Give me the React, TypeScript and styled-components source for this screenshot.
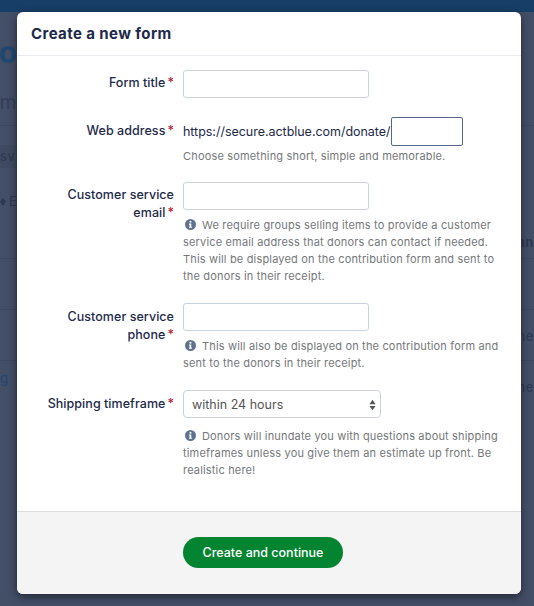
import React from 'react';
import styled, { createGlobalStyle } from 'styled-components';

const GlobalStyle = createGlobalStyle`
  html, body {
    margin: 0;
    padding: 0;
    height: 100%;
    overflow: hidden;
    background: #434e67;
  }
  * {
    box-sizing: border-box;
  }
`;

const Page = styled.div`
  position: relative;
  width: 534px;
  height: 606px;
  overflow: hidden;
  background: #434e67;
  font-family: Inter, "Liberation Sans", sans-serif;
`;

const TopBar = styled.div`
  height: 12px;
  background: #173e66;
`;

const BackdropTitle = styled.div`
  height: 66px;
  padding-top: 20px;
  margin-left: -18px;
  font-size: 30px;
  line-height: 40px;
  font-weight: 700;
  color: #1f4770;
`;

const BackdropTabs = styled.div`
  height: 48px;
  padding-top: 13px;
  margin-left: -11px;
  font-size: 19px;
  line-height: 24px;
  color: #343e57;
  border-bottom: 1px solid #3d475f;
`;

const BackdropRow = styled.div<{ $height: number; $plain?: boolean }>`
  height: ${(p) => p.$height}px;
  display: flex;
  justify-content: space-between;
  border-bottom: ${(p) => (p.$plain ? 'none' : '1px solid #3d475f')};
`;

const BackdropColumn = styled.div`
  display: flex;
  flex-direction: column;
`;

const BackdropBand = styled.div`
  position: absolute;
  top: 145px;
  left: 0;
  width: 17px;
  height: 23px;
  background: #3f4a62;
`;

const BackdropText = styled.span<{ $top: number; $bold?: boolean; $link?: boolean }>`
  margin-top: ${(p) => p.$top}px;
  position: relative;
  font-size: 13px;
  line-height: 16px;
  letter-spacing: 0.6px;
  font-weight: ${(p) => (p.$bold ? 700 : 400)};
  color: ${(p) => (p.$link ? '#1f4770' : '#2e3850')};
`;

const BackdropIcon = styled.svg`
  width: 6px;
  height: 8px;
  margin-right: 3px;
  fill: #2e3850;
`;

const Modal = styled.div`
  position: absolute;
  top: 12px;
  left: 17px;
  width: 504px;
  height: 582px;
  display: flex;
  flex-direction: column;
  background: #fff;
  border-radius: 6px;
  box-shadow: 0 3px 9px rgba(0, 0, 0, 0.5);
  overflow: hidden;
`;

const Header = styled.div`
  height: 44px;
  flex: none;
  display: flex;
  align-items: center;
  padding-left: 14px;
  border-bottom: 1px solid #e8eaee;
`;

const Title = styled.h3`
  margin: 0;
  font-size: 15px;
  font-weight: 700;
  letter-spacing: 0.4px;
  color: #1e2a4a;
`;

const Body = styled.div`
  flex: 1;
  padding-top: 14px;
`;

const Field = styled.div<{ $bottom: number }>`
  display: grid;
  grid-template-columns: 157px 1fr;
  column-gap: 9px;
  margin-bottom: ${(p) => p.$bottom}px;
`;

const Label = styled.label<{ $top?: number }>`
  text-align: right;
  font-size: 12.5px;
  font-weight: 500;
  line-height: 18px;
  letter-spacing: 0.05px;
  color: #1e2a4a;
  padding: ${(p) => p.$top ?? 4}px 0 0 28px;
`;

const Required = styled.span`
  color: #b3152b;
  margin-left: 2px;
`;

const TextInput = styled.input`
  display: block;
  width: 186px;
  height: 28px;
  padding: 0 8px;
  border: 1px solid #c9d2e0;
  border-radius: 3px;
  background: #fff;
  outline: none;
`;

const AddressRow = styled.div`
  display: flex;
  align-items: center;
  height: 28px;
  font-size: 12.5px;
  letter-spacing: -0.03px;
  color: #1e2a4a;
`;

const SlugInput = styled.input`
  display: block;
  flex: none;
  width: 72px;
  height: 29px;
  padding: 0 6px;
  border: 1px solid #56688a;
  border-radius: 2px;
  background: #fff;
  outline: none;
`;

const SelectBox = styled.div`
  width: 198px;
  height: 28px;
  display: flex;
  align-items: center;
  justify-content: space-between;
  padding: 1px 4px 0 8px;
  border: 1px solid #c9d2e0;
  border-radius: 4px;
  font-size: 12.5px;
  color: #555;
`;

const Help = styled.p<{ $top: number }>`
  margin: ${(p) => p.$top}px 0 0;
  width: 322px;
  font-size: 11px;
  line-height: 17px;
  letter-spacing: 0.17px;
  color: #75777b;
`;

const InfoIcon = styled.svg`
  width: 11px;
  height: 11px;
  margin: 0 6px 0 2px;
  vertical-align: -1px;
  fill: #5f7390;
`;

const Footer = styled.div`
  height: 83px;
  flex: none;
  display: flex;
  align-items: flex-start;
  justify-content: center;
  padding: 25px 12px 0 0;
  background: #f4f4f4;
  border-top: 1px solid #dcdcdc;
`;

const SubmitButton = styled.button`
  width: 160px;
  height: 31px;
  border: none;
  border-radius: 16px;
  background: #038430;
  color: #fff;
  font-family: inherit;
  font-size: 12.5px;
  font-weight: 500;
`;

const Info = () => (
  <InfoIcon viewBox="0 0 16 16">
    <path d="M8 0a8 8 0 1 0 0 16A8 8 0 0 0 8 0zm0 2.6a1.5 1.5 0 1 1 0 3 1.5 1.5 0 0 1 0-3zM10.2 12.6H5.8v-1.5h.9V8.2h-.9V6.7h3.3v4.4h1.1z" />
  </InfoIcon>
);

const Stepper = () => (
  <svg width="7" height="12" viewBox="0 0 8 13" fill="#555">
    <path d="M4 0.5 7.5 5.5H0.5z" />
    <path d="M4 12.5 0.5 7.5H7.5z" />
  </svg>
);

export default function App() {
  return (
    <Page>
      <GlobalStyle />
      <TopBar />
      <BackdropBand />
      <BackdropTitle>Fo</BackdropTitle>
      <BackdropTabs>am</BackdropTabs>
      <BackdropRow $height={133}>
        <BackdropColumn>
          <BackdropText $top={22}>sv</BackdropText>
          <BackdropText $top={29}>
            <BackdropIcon viewBox="0 0 6 8">
              <path d="M0 4 3 0l3 3-3 5z" />
            </BackdropIcon>
            Ev
          </BackdropText>
        </BackdropColumn>
        <BackdropColumn>
          <BackdropText $top={108} $bold>ran</BackdropText>
        </BackdropColumn>
      </BackdropRow>
      <BackdropRow $height={51} />
      <BackdropRow $height={51}>
        <span />
        <BackdropColumn>
          <BackdropText $top={18}>one</BackdropText>
        </BackdropColumn>
      </BackdropRow>
      <BackdropRow $height={51} $plain>
        <BackdropColumn>
          <BackdropText $top={9} $link>g</BackdropText>
        </BackdropColumn>
        <BackdropColumn>
          <BackdropText $top={18}>one</BackdropText>
        </BackdropColumn>
      </BackdropRow>
      <Modal>
        <Header>
          <Title>Create a new form</Title>
        </Header>
        <Body>
          <Field $bottom={19}>
            <Label>Form title<Required>*</Required></Label>
            <TextInput />
          </Field>
          <Field $bottom={17}>
            <Label $top={5}>Web address<Required>*</Required></Label>
            <div>
              <AddressRow>
                https://secure.actblue.com/donate/
                <SlugInput />
              </AddressRow>
              <Help $top={3}>Choose something short, simple and memorable.</Help>
            </div>
          </Field>
          <Field $bottom={18}>
            <Label>Customer service email<Required>*</Required></Label>
            <div>
              <TextInput />
              <Help $top={7}>
                <Info />
                We require groups selling items to provide a customer service email address that donors can contact if needed. This will be displayed on the contribution form and sent to the donors in their receipt.
              </Help>
            </div>
          </Field>
          <Field $bottom={18}>
            <Label $top={5}>Customer service phone<Required>*</Required></Label>
            <div>
              <TextInput />
              <Help $top={7}>
                <Info />
                This will also be displayed on the contribution form and sent to the donors in their receipt.
              </Help>
            </div>
          </Field>
          <Field $bottom={0}>
            <Label $top={5}>Shipping timeframe<Required>*</Required></Label>
            <div>
              <SelectBox>
                within 24 hours
                <Stepper />
              </SelectBox>
              <Help $top={10}>
                <Info />
                Donors will inundate you with questions about shipping timeframes unless you give them an estimate up front. Be realistic here!
              </Help>
            </div>
          </Field>
        </Body>
        <Footer>
          <SubmitButton>Create and continue</SubmitButton>
        </Footer>
      </Modal>
    </Page>
  );
}
